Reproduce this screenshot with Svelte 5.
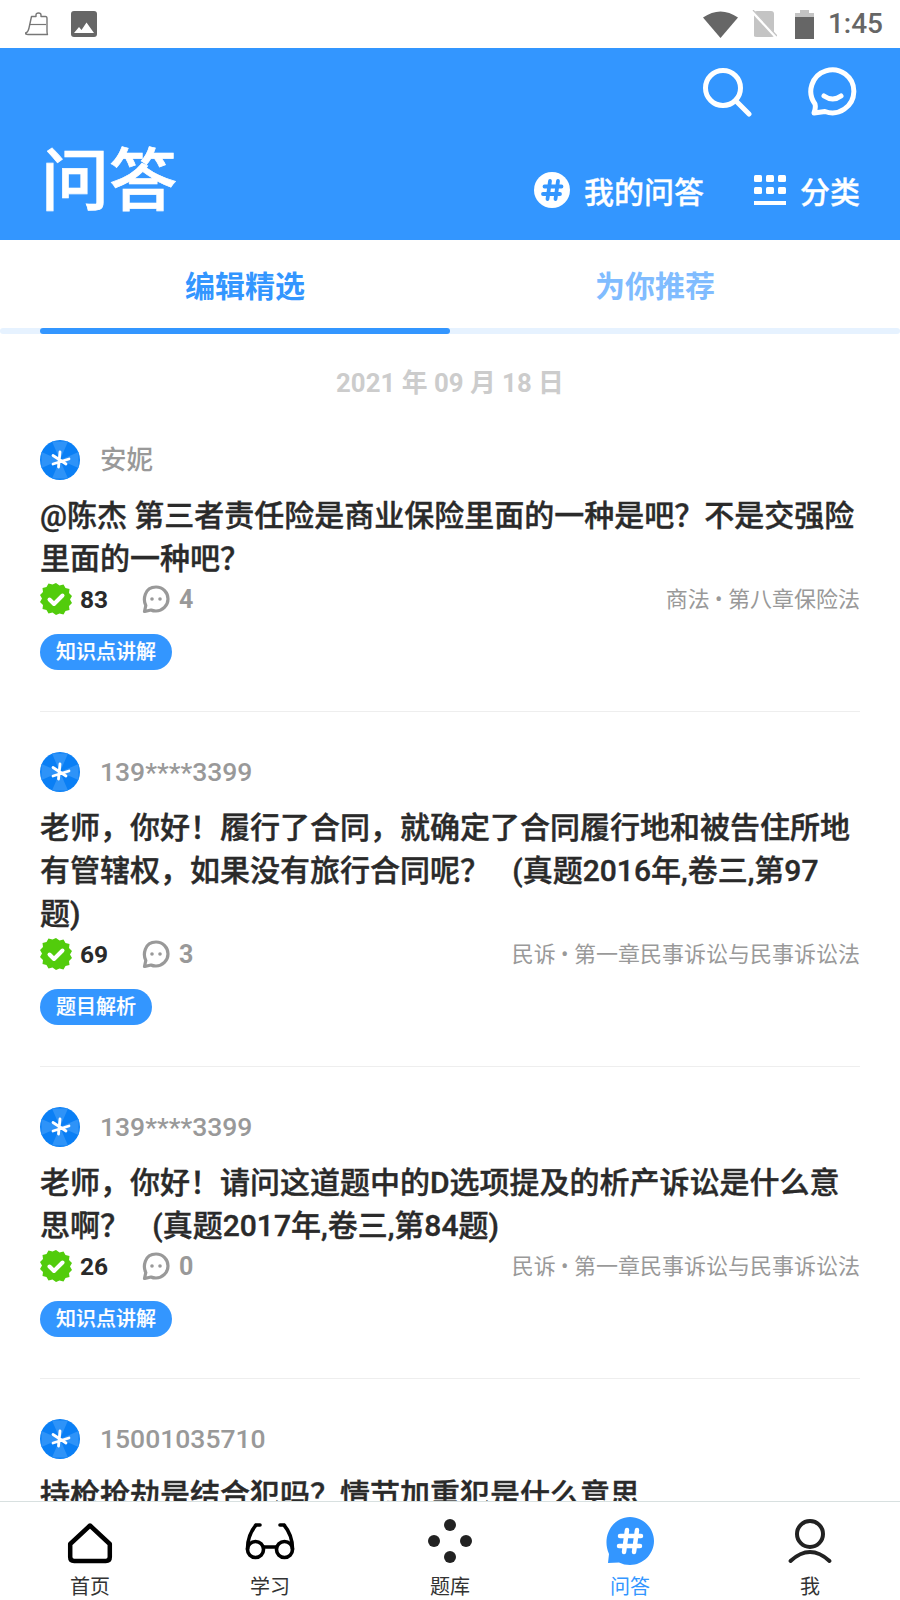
<script>
  const items = [
    { name: '安妮', title: '@陈杰 第三者责任险是商业保险里面的一种是吧？不是交强险里面的一种吧？', likes: 83, comments: 4, cat: '商法 • 第八章保险法', tag: '知识点讲解' },
    { name: '139****3399', title: '老师，你好！履行了合同，就确定了合同履行地和被告住所地有管辖权，如果没有旅行合同呢？\u00a0\u00a0\u00a0(真题2016年,卷三,第97题)', likes: 69, comments: 3, cat: '民诉 • 第一章民事诉讼与民事诉讼法', tag: '题目解析' },
    { name: '139****3399', title: '老师，你好！请问这道题中的D选项提及的析产诉讼是什么意思啊？\u00a0\u00a0\u00a0(真题2017年,卷三,第84题)', likes: 26, comments: 0, cat: '民诉 • 第一章民事诉讼与民事诉讼法', tag: '知识点讲解' },
    { name: '15001035710', title: '持枪抢劫是结合犯吗？情节加重犯是什么意思', likes: 0, comments: 0, cat: '', tag: '' }
  ];
</script>

<div class="page">
  <div class="status">
    <div class="status-left">
      <svg viewBox="0 0 24 24" width="24" height="24" fill="none" stroke="#777" stroke-width="1.400" stroke-linejoin="round">
        <path d="M6.500 4.500h4.500V3Q11 1 13.500 1T16 3V4.500h4.500q1.500 0 1.500 2V19q0 2.500 .5 3.500H3q-2.500 0-2.500-1.500q2.500-.5 3.500-5z"/>
        <path d="M4.500 12.500H21" stroke-width="1.200"/>
      </svg>
      <svg viewBox="0 0 26 26" width="26" height="26">
        <rect width="26" height="26" rx="3" fill="#666"/>
        <path d="M3 22l5-6 2.500 3 5-7.500L23 22z" fill="#fff"/>
      </svg>
    </div>
    <div class="status-right">
      <svg viewBox="0 0 35 28" width="35" height="28"><path d="M0 7.500Q17.500-4.500 35 7.500L17.500 28z" fill="#666"/></svg>
      <svg class="st-sim" viewBox="0 0 26 28" width="26" height="28">
        <path d="M3 4q0-3 3-3h14q3 0 3 3v22q0 1-3 1H6q-3 0-3-1z" fill="#c4c4c4"/>
        <path d="M1 1l24 26" stroke="#fff" stroke-width="3"/>
        <path d="M2 0l24 26" stroke="#c4c4c4" stroke-width="1.200"/>
      </svg>
      <svg class="st-bat" viewBox="0 0 19 29" width="19" height="29">
        <path d="M5 0h9v3H5z" fill="#c4c4c4"/><rect y="3" width="19" height="5" fill="#c4c4c4"/><rect y="7" width="19" height="22" fill="#666"/>
      </svg>
      <span class="time">1:45</span>
    </div>
  </div>

  <header class="hero">
    <div class="hero-top">
      <svg viewBox="0 0 50 50" width="50" height="50" fill="none" stroke="#fff" stroke-width="5" stroke-linecap="round">
        <circle cx="21" cy="21" r="17.500"/><path d="M34 34l13 13"/>
      </svg>
      <svg viewBox="0 0 50 50" width="50" height="50" fill="none" stroke="#fff" stroke-width="5" stroke-linecap="round" stroke-linejoin="round">
        <path d="M7 37A21.500 21.500 0 1 1 17 44.500L6 46Q8 41 7 37z"/>
        <path d="M16 29q9 6 17 0"/>
      </svg>
    </div>
    <div class="hero-bottom">
      <h1>问答</h1>
      <div class="hero-links">
        <div class="hero-link">
          <svg viewBox="0 0 36 36" width="36" height="36">
            <circle cx="18" cy="18" r="18" fill="#fff"/>
            <path d="M16 9l-2.500 18M24 9l-2.500 18M10.500 14.500h17M9 22h17" stroke="#3396ff" stroke-width="3.800" stroke-linecap="round"/>
          </svg>
          <span>我的问答</span>
        </div>
        <div class="hero-link">
          <svg viewBox="0 0 32 30" width="32" height="30" fill="#fff">
            <rect x="0" y="0" width="8" height="7" rx="1.500"/><rect x="12" y="0" width="8" height="7" rx="1.500"/><rect x="24" y="0" width="8" height="7" rx="1.500"/>
            <rect x="0" y="12" width="8" height="7" rx="1.500"/><rect x="12" y="12" width="8" height="7" rx="1.500"/><rect x="24" y="12" width="8" height="7" rx="1.500"/>
            <rect x="0" y="26" width="32" height="4"/>
          </svg>
          <span>分类</span>
        </div>
      </div>
    </div>
  </header>

  <nav class="tabs">
    <div class="tab-row">
      <span class="tab active">编辑精选</span>
      <span class="tab">为你推荐</span>
    </div>
    <div class="track"><div class="thumb"></div></div>
  </nav>

  <main class="list">
    <div class="date">2021 年 09 月 18 日</div>
    {#each items as it}
      <article class="item">
        <div class="who">
          <svg viewBox="0 0 40 40" width="40" height="40">
            <circle cx="20" cy="20" r="20" fill="#0a7ff5"/>
            <path d="M20 20L12 1.500 28 1.500zM20 20L38.500 12 38.500 28zM20 20L28 38.500 12 38.500zM20 20L1.500 28 1.500 12z" fill="#2e93f8"/>
            <g stroke="#fff" stroke-width="2.800" stroke-linecap="round">
              <path d="M20 12l-1.500 15M13 15.500L26 24M13 24l16-5"/>
            </g>
          </svg>
          <span class="name">{it.name}</span>
        </div>
        <h2>{it.title}</h2>
        {#if it.tag}
          <div class="meta">
            <svg viewBox="0 0 32 32" width="32" height="32">
              <path fill="#52cc0c" d="M16 0l3.500 2.500 4-1 2 3.500 4 1-.5 4 3 3-2 3.500 2 3.500-3 3 .5 4-4 1-2 3.500-4-1L16 32l-3.500-2.500-4 1-2-3.500-4-1 .5-4-3-3 2-3.500-2-3.500 3-3-.5-4 4-1 2-3.500 4 1z"/>
              <path d="M9.500 16.500l4.500 4.500 8.500-8.500" fill="none" stroke="#fff" stroke-width="4" stroke-linecap="round" stroke-linejoin="round"/>
            </svg>
            <span class="likes">{it.likes}</span>
            <svg viewBox="0 0 28 28" width="28" height="28">
              <path d="M2.500 26.500l1.300-6C1 15 2 2 14 2c7 0 12 5.500 12 12s-5.500 12-12 12q-3 0-5-1z" fill="none" stroke="#999" stroke-width="3.200" stroke-linejoin="round"/>
              <circle cx="10" cy="14" r="1.800" fill="#999"/><circle cx="18" cy="14" r="1.800" fill="#999"/>
            </svg>
            <span class="comments">{it.comments}</span>
            <span class="cat">{it.cat}</span>
          </div>
          <div class="tag">{it.tag}</div>
        {/if}
      </article>
    {/each}
  </main>

  <footer class="nav">
    <div class="nav-item">
      <svg viewBox="0 0 50 50" width="50" height="50" fill="none" stroke="#000" stroke-width="4.500" stroke-linejoin="round">
        <path d="M25 8.500L44.800 27V40q0 4-4 4H9.200q-4 0-4-4V27z"/>
      </svg>
      <span>首页</span>
    </div>
    <div class="nav-item">
      <svg viewBox="0 0 50 50" width="50" height="50" fill="none" stroke="#000" stroke-width="3.600" stroke-linecap="round">
        <circle cx="10.500" cy="32.500" r="8"/><circle cx="39.500" cy="32.500" r="8"/>
        <path d="M18.500 30h13M2.500 32Q2.500 18 11 8h4M47.500 32Q47.500 18 39 8h-4"/>
      </svg>
      <span>学习</span>
    </div>
    <div class="nav-item">
      <svg viewBox="0 0 50 50" width="50" height="50" fill="#222">
        <circle cx="25" cy="8" r="6"/><circle cx="9" cy="24" r="6"/><circle cx="41" cy="24" r="6"/><circle cx="25" cy="40" r="6"/>
      </svg>
      <span>题库</span>
    </div>
    <div class="nav-item active">
      <svg viewBox="0 0 50 50" width="50" height="50">
        <path d="M3 46l1-9C-4 19 8 0 25 0c13 0 24 11 24 24S38 48 25 48q-6 0-11-2.500z" fill="#3396ff"/>
        <path d="M22 13l-3 22M32 13l-3 22M15 19h21M14 29h21" stroke="#fff" stroke-width="4.500" stroke-linecap="round"/>
      </svg>
      <span>问答</span>
    </div>
    <div class="nav-item">
      <svg viewBox="0 0 50 50" width="50" height="50" fill="none" stroke="#222" stroke-width="4" stroke-linecap="round">
        <circle cx="25" cy="17" r="13"/><path d="M5.500 44Q25 26 44.500 44"/>
      </svg>
      <span>我</span>
    </div>
  </footer>
</div>

<style>
  :global(body) { margin: 0; background: #fff; }
  .page {
    width: 900px; height: 1600px; display: flex; flex-direction: column; overflow: hidden;
    font-family: Roboto, "Noto Sans CJK SC", sans-serif; background: #fff;
  }
  svg { display: block; flex: none; }
  .status { height: 48px; flex: none; display: flex; justify-content: space-between; align-items: center; padding: 0 17px 0 25px; }
  .status-left { display: flex; align-items: center; gap: 22px; }
  .status-right { display: flex; align-items: center; }
  .st-sim { margin-left: 13px; }
  .st-bat { margin-left: 18px; }
  .time { margin-left: 14px; font-size: 28px; font-weight: 500; color: #666; line-height: 48px; }
  .hero { height: 192px; flex: none; background: #3396ff; color: #fff; display: flex; flex-direction: column; }
  .hero-top { display: flex; justify-content: flex-end; gap: 56px; padding: 19px 42px 0 0; }
  .hero-bottom { display: flex; justify-content: space-between; align-items: flex-start; padding: 0 40px 0 41px; flex: 1; }
  h1 { margin: 19px 0 0; font-size: 68px; font-weight: 500; line-height: 80px; font-family: "Noto Sans CJK SC", sans-serif; -webkit-text-stroke: .7px #fff; }
  .hero-links { display: flex; align-items: center; gap: 50px; margin-top: 51px; }
  .hero-link { display: flex; align-items: center; gap: 14px; font-size: 30px; font-weight: 500; -webkit-text-stroke: .3px #fff; }
  .tabs { flex: none; height: 95px; display: flex; flex-direction: column; }
  .tab-row { flex: none; display: flex; padding: 6px 40px 0; height: 82px; }
  .tab { flex: 1; text-align: center; font-size: 30px; font-weight: 700; color: #80bcff; line-height: 82px; }
  .tab.active { color: #3396ff; }
  .track { height: 6px; background: #e6f2ff; border-radius: 3px; padding-left: 40px; }
  .thumb { width: 410px; height: 6px; border-radius: 3px; background: #3396ff; }
  .list { flex: 1; min-height: 0; overflow: hidden; }
  .date { text-align: center; font-size: 25.800px; font-weight: 700; color: #ccc; line-height: 36px; padding: 30px 0 39px; }
  .item { margin: 0 40px 40px; padding-bottom: 41px; border-bottom: 1px solid #eee; }
  .who { display: flex; align-items: center; gap: 20px; height: 40px; }
  .name { font-size: 26.500px; font-weight: 500; color: #999; line-height: 36px; margin-top: -1px; }
  h2 { margin: 14px 0 0; padding-right: 3px; font-size: 30px; line-height: 43px; font-weight: 500; color: #2a2a2a; -webkit-text-stroke: .4px #2a2a2a; }
  .meta { display: flex; align-items: center; height: 36px; margin-top: 1px; }
  .likes { margin-left: 8px; font-size: 24.500px; font-weight: 700; color: #2a2a2a; width: 62px; }
  .comments { margin-left: 9px; font-size: 25px; font-weight: 700; color: #999; }
  .cat { margin-left: auto; font-size: 22px; color: #999; margin-top: -4px; }
  .tag { display: inline-block; margin-top: 17px; height: 36px; line-height: 36px; padding: 0 16px; border-radius: 18px; background: #3396ff; color: #fff; font-size: 20px; font-weight: 500; vertical-align: top; -webkit-text-stroke: .2px #fff; }
  .nav { flex: none; height: 98px; border-top: 1px solid #d8e0e0; background: #fff; display: grid; grid-template-columns: repeat(5, 180px); }
  .nav-item { display: flex; flex-direction: column; align-items: center; padding-top: 15px; font-size: 20px; color: #333; }
  .nav-item span { line-height: 30px; margin-top: 5px; }
  .nav-item.active { color: #3396ff; }
</style>
